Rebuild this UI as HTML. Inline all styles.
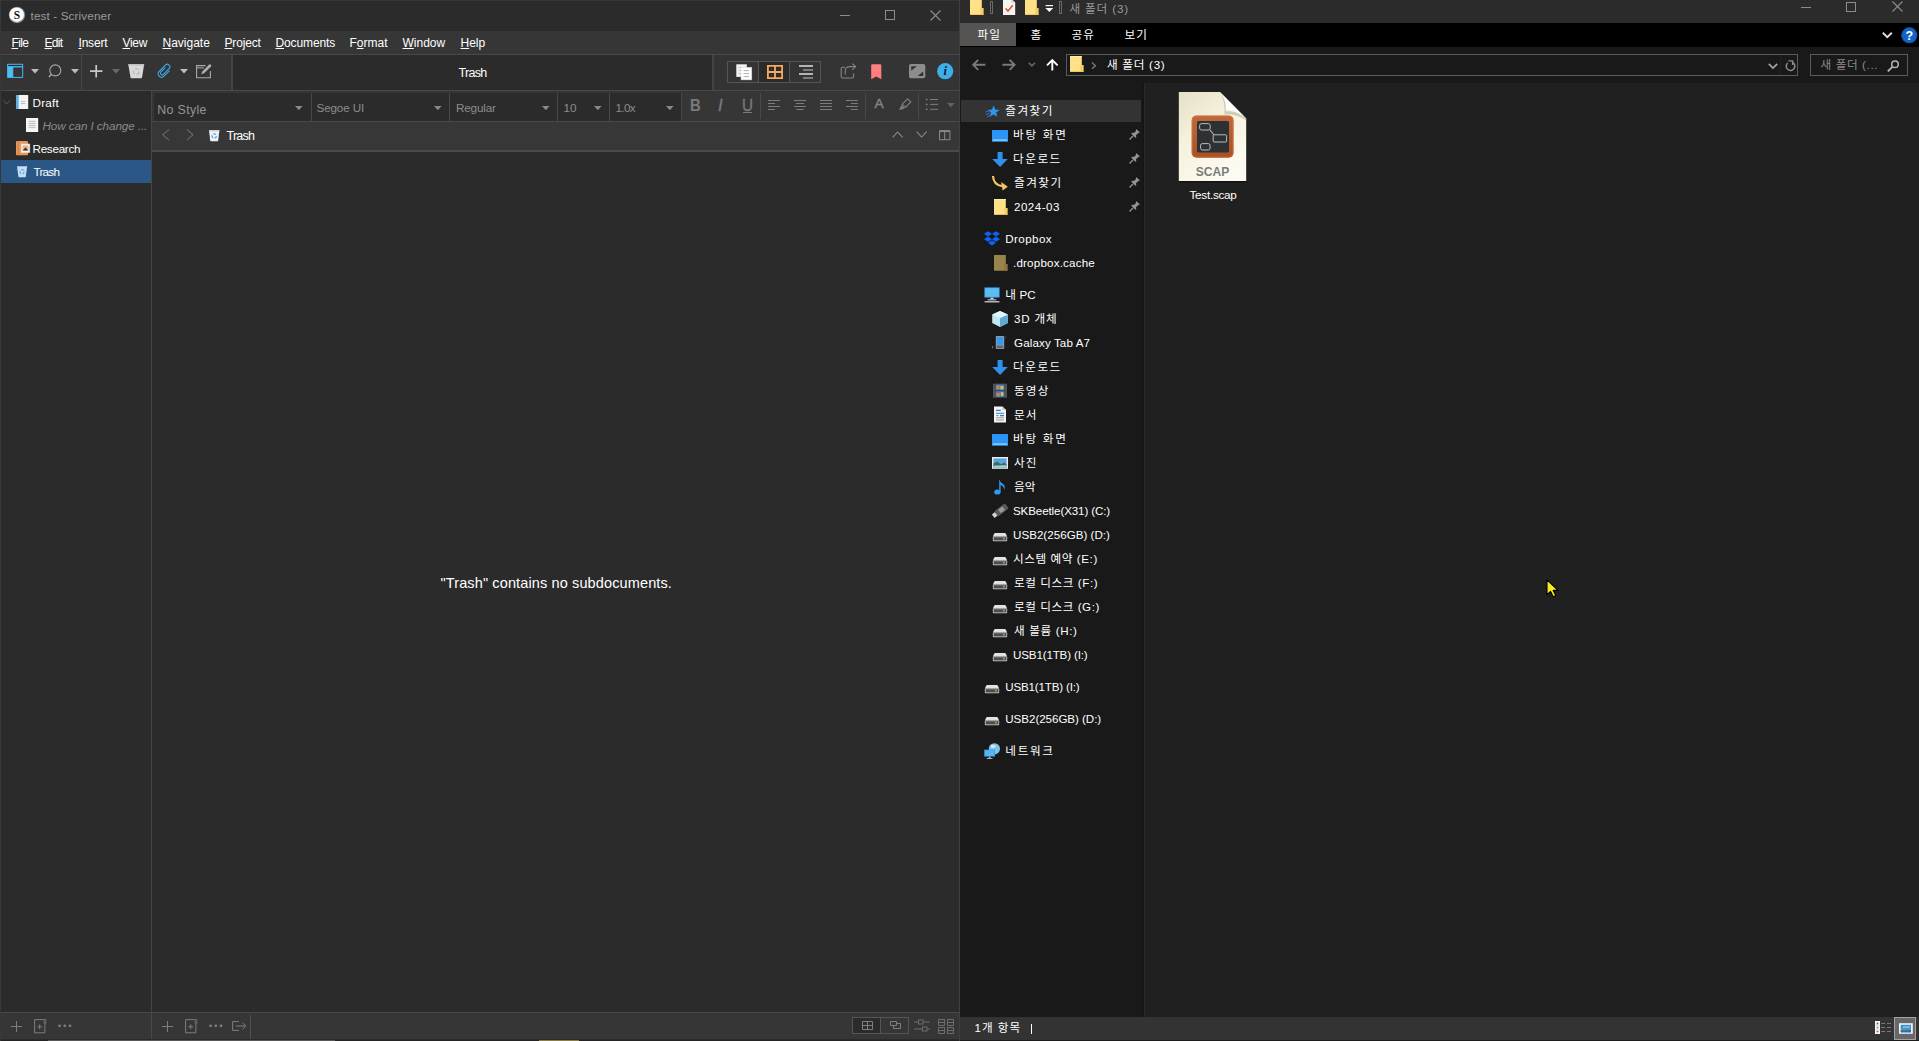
<!DOCTYPE html>
<html lang="ko">
<head>
<meta charset="utf-8">
<title>test - Scrivener</title>
<style>
*{box-sizing:border-box;margin:0;padding:0}
html,body{width:1919px;height:1041px;overflow:hidden;background:#2b2b2b}
body{position:relative;font-family:"Liberation Sans","Noto Sans CJK KR",sans-serif;font-size:12px;color:#fff}
.a{position:absolute}
.t{position:absolute;white-space:nowrap;line-height:20px;height:20px}
.t u{text-decoration:underline;text-underline-offset:0.6px;text-decoration-thickness:1px}
svg{position:absolute;overflow:visible}
#scr{left:0;top:0;width:960px;height:1041px;background:#2b2b2b;overflow:hidden;border-left:1px solid #383838;border-right:1px solid #404040}
#scr>div{margin-left:-1px}
#s-title{left:0;top:0;width:960px;height:31px;background:#2b2b2b;box-shadow:inset 0 1px 0 #363636}
#s-menu{left:0;top:31px;width:960px;height:24px;background:#363636;border-bottom:1px solid #494949}
#s-tool{left:0;top:55px;width:960px;height:36px;background:#343434;border-bottom:1px solid #494949}
#s-tool-mid{left:233px;top:0;width:479px;height:35px;background:#2b2b2b}
#s-binder{left:0;top:91px;width:152px;height:921px;background:#2b2b2b;border-right:1px solid #464646}
#s-fmt{left:152px;top:91px;width:808px;height:31px;background:#363636;border-bottom:1px solid #494949}
#s-hdr{left:152px;top:122px;width:808px;height:30px;background:#373737;border-bottom:2px solid #4a4a4a}
#s-foot{left:0;top:1012px;width:960px;height:29px;background:#363636;border-top:1px solid #494949}
.combo{position:absolute;top:2px;height:28px;background:#2b2b2b;box-shadow:1px 0 0 #484848}
#exp{left:960px;top:0;width:959px;height:1041px;background:#202020;overflow:hidden}
#e-title{left:0;top:0;width:959px;height:23px;background:#2b2b2b}
#e-tabs{left:0;top:23px;width:959px;height:24px;background:#000}
#e-addr{left:0;top:47px;width:959px;height:36px;background:#191919}
#e-nav{left:0;top:83px;width:185px;height:934px;background:#191919;border-right:1px solid #2b2b2b}
#e-status{left:0;top:1017px;width:959px;height:23px;background:#333}
#e-bot{left:0;top:1040px;width:959px;height:1px;background:#1c1c1c}
</style>
</head>
<body>
<div id="scr" class="a">
  <div id="s-title" class="a">
    <svg style="left:8px;top:6px" width="18" height="18" viewBox="0 0 18 18"><circle cx="9" cy="9" r="8.2" fill="#8a8a8a"/><circle cx="8.7" cy="8.7" r="7.3" fill="#fdfdfd"/><text x="8.9" y="12.8" text-anchor="middle" font-family="Liberation Serif,serif" font-weight="bold" font-size="11.5" fill="#111">S</text></svg>
    <div class="a" style="left:840px;top:15px;width:10px;height:1px;background:#8c8c8c"></div>
    <div class="a" style="left:885px;top:10px;width:10px;height:10px;border:1px solid #8c8c8c"></div>
    <svg style="left:930px;top:10px" width="11" height="11" viewBox="0 0 11 11"><path d="M0.5 0.5L10.5 10.5M10.5 0.5L0.5 10.5" stroke="#8c8c8c" stroke-width="1.1" fill="none"/></svg>
  </div>
  <div id="s-menu" class="a"></div>
  <div id="s-tool" class="a">
    <div class="a" style="left:81px;top:0;width:1px;height:35px;background:#474747"></div>
    <div class="a" style="left:231px;top:0;width:2px;height:35px;background:#444"></div>
    <div id="s-tool-mid" class="a"></div>
    <div class="a" style="left:712px;top:0;width:2px;height:35px;background:#444"></div>
    <!-- binder toggle icon  x7-23 y64-78 -->
    <svg style="left:7px;top:8px" width="17" height="16" viewBox="0 0 17 16"><rect x="0" y="0.8" width="16.2" height="14.3" rx="0.8" fill="#3daee9"/><rect x="1.2" y="1.9" width="13.8" height="1.1" fill="#2e2a2a"/><rect x="6.3" y="4.5" width="8.8" height="9.4" fill="#343434"/><rect x="1" y="4" width="4.6" height="10.2" fill="#52bcf0"/></svg>
    <svg style="left:31px;top:14px" width="8" height="5" viewBox="0 0 8 5"><path d="M0 0H8L4 4.6Z" fill="#bdbdbd"/></svg>
    <!-- search x48-62 y64-78 -->
    <svg style="left:48px;top:9px" width="15" height="15" viewBox="0 0 15 15"><circle cx="7.3" cy="6.4" r="5.5" fill="none" stroke="#a6a6a6" stroke-width="1.1"/><path d="M3.5 10.3L0.9 13" stroke="#a6a6a6" stroke-width="1.5"/></svg>
    <svg style="left:71px;top:14px" width="8" height="5" viewBox="0 0 8 5"><path d="M0 0H8L4 4.6Z" fill="#bdbdbd"/></svg>
    <!-- plus x90-102 -->
    <svg style="left:90px;top:10px" width="13" height="13" viewBox="0 0 13 13"><path d="M6.2 0V12.4M0 6.2H12.4" stroke="#c8c8c8" stroke-width="1.7"/></svg>
    <svg style="left:112px;top:14px" width="8" height="5" viewBox="0 0 8 5"><path d="M0 0H8L4 4.6Z" fill="#6a6a6a"/></svg>
    <!-- trash x128-144 y64-78 -->
    <svg style="left:128px;top:9px" width="17" height="15" viewBox="0 0 17 15"><path d="M0.3 0.3H16.2L14 13.6Q13.9 14.2 13.3 14.2H3.2Q2.6 14.2 2.5 13.6Z" fill="#d9d9d9"/><path d="M0.3 0.3H16.2L16 1.8H0.5Z" fill="#c4c4c4"/><circle cx="8.2" cy="7.6" r="2.9" fill="none" stroke="#b6bac6" stroke-width="1.3" stroke-dasharray="4 2"/></svg>
    <!-- paperclip x157-172 y63-79 -->
    <svg style="left:156px;top:8px" width="17" height="17" viewBox="0 0 17 17"><g transform="translate(8.4 7.9) rotate(45) scale(0.95) translate(-4.1 -8.75)"><path d="M7.7 5V13A3.6 3.6 0 0 1 0.5 13V3.6A2.7 2.7 0 0 1 5.9 3.6V12A1.8 1.8 0 0 1 2.3 12V6" fill="none" stroke="#3daee9" stroke-width="1.1" stroke-linecap="round"/></g></svg>
    <svg style="left:180px;top:14px" width="8" height="5" viewBox="0 0 8 5"><path d="M0 0H8L4 4.6Z" fill="#bdbdbd"/></svg>
    <!-- compose x196-211 y64-78 -->
    <svg style="left:196px;top:8px" width="17" height="16" viewBox="0 0 17 16"><path d="M9.5 2.6H0.6V14.8H14.4V8" fill="none" stroke="#a8a8a8" stroke-width="1.1"/><path d="M0.6 4.9H8" stroke="#a8a8a8" stroke-width="1"/><path d="M5.2 11.3L6.3 8.4L13.2 1.5Q14 0.8 14.9 1.7Q15.7 2.6 15 3.4L8.1 10.2Z" fill="#b0b0b0"/></svg>
    <!-- view mode group x727-821 y61-82 -->
    <div class="a" style="left:727px;top:6px;width:94px;height:22px;border:1px solid #555"></div>
    <div class="a" style="left:758px;top:7px;width:32px;height:20px;background:#2b2b2b;border-left:1px solid #555;border-right:1px solid #555"></div>
    <svg style="left:736px;top:9px" width="17" height="17" viewBox="0 0 17 17"><rect x="0.3" y="0.3" width="10.5" height="12.6" fill="#f1f1f1"/><path d="M2.6 3.4H5M2.6 6.4H5M2.6 9.4H5" stroke="#bdbdbd" stroke-width="0.9"/><rect x="5" y="3.3" width="10.8" height="12.6" fill="#fff" stroke="#d0d0d0" stroke-width="0.5"/><path d="M7.6 6.6H13M7.6 9.6H13M7.6 12.6H13" stroke="#b0b0b0" stroke-width="1"/></svg>
    <svg style="left:767px;top:10px" width="16" height="14" viewBox="0 0 16 14"><path d="M0.9 0.9H15.1V13.1H0.9ZM8 0.9V13.1M0.9 7H15.1" fill="none" stroke="#f5a95f" stroke-width="1.8"/></svg>
    <svg style="left:799px;top:9px" width="15" height="15" viewBox="0 0 15 15"><path d="M0 2H14M0 10H14" stroke="#b4b4b4" stroke-width="1.8"/><path d="M4 6H14M4 14H14" stroke="#7c7c7c" stroke-width="1.8"/></svg>
    <!-- share x841-856 y63-78 -->
    <svg style="left:840.4px;top:8px" width="17" height="17" viewBox="0 0 17 17"><path d="M5 4.2H2.6Q1.2 4.2 1.2 5.6V13.6Q1.2 15 2.6 15H12.2Q13.6 15 13.6 13.6V10.5" fill="none" stroke="#858585" stroke-width="1.1"/><path d="M5.3 11.5V8Q5.3 3.6 10 3.6H15.5M12.3 0.6L15.6 3.6L12.3 6.8" fill="none" stroke="#858585" stroke-width="1.1"/></svg>
    <svg style="left:871px;top:9px" width="11" height="16" viewBox="0 0 11 16"><path d="M0.2 1.2Q0.2 0.2 1.2 0.2H9.3Q10.3 0.2 10.3 1.2V15.3L5.2 12.4L0.2 15.3Z" fill="#ff7f7f"/></svg>
    <!-- compose mode x909-925 y64-78 -->
    <svg style="left:909px;top:9px" width="17" height="15" viewBox="0 0 17 15"><rect x="0" y="0" width="16.3" height="14.2" rx="2" fill="#8d8d8d"/><path d="M2.2 6.8V2.2H7.8ZM14.2 7.4V12H8.6Z" fill="#333"/></svg>
    <svg style="left:937px;top:8px" width="17" height="17" viewBox="0 0 17 17"><circle cx="8.2" cy="8.2" r="8.1" fill="#3daee9"/><text x="8.3" y="12.4" text-anchor="middle" font-family="Liberation Serif,serif" font-style="italic" font-weight="bold" font-size="12.5" fill="#1a1a1a">i</text></svg>
  </div>
  <div id="s-binder" class="a">
    <div class="a" style="left:1px;top:69px;width:150px;height:23px;background:#2a5785"></div>
    <svg style="left:3px;top:9px" width="8" height="5" viewBox="0 0 8 5"><path d="M0.3 0.4L3.6 4L6.9 0.4" fill="none" stroke="#5a5a5a" stroke-width="1"/></svg>
    <!-- draft icon x16-28 y95-109 -->
    <svg style="left:16px;top:4px" width="13" height="15" viewBox="0 0 13 15"><rect x="0" y="0" width="12.2" height="14" fill="#f4f4f4"/><rect x="0" y="0" width="2.7" height="14" fill="#5cb0ea"/><path d="M5 6.4H9.4M5 8.5H9.4" stroke="#b9b9b9" stroke-width="0.9"/></svg>
    <!-- doc icon x26-38 y118-132 -->
    <svg style="left:26px;top:27px" width="13" height="15" viewBox="0 0 13 15"><rect x="0" y="0" width="12.2" height="14" fill="#f6f6f6"/><path d="M2.6 3.3H9.6M2.6 5.4H9.6M2.6 7.5H9.6M2.6 9.6H9.6" stroke="#b4b4b4" stroke-width="0.9"/></svg>
    <!-- research icon x16-30 y141-155 -->
    <svg style="left:16px;top:50px" width="15" height="15" viewBox="0 0 15 15"><rect x="0" y="0" width="12" height="14.2" rx="1" fill="#e9965c"/><rect x="1.6" y="0" width="1" height="14.2" fill="#c97a45"/><rect x="5.2" y="3" width="8.6" height="8.6" fill="#f7f7f7" stroke="#d9d9d9" stroke-width="0.6"/><rect x="6.6" y="4.4" width="5.8" height="5.6" fill="#f2b272"/><path d="M6.8 9.6L9.5 6.2L12.2 9.6Z" fill="#3a3a3a"/></svg>
    <!-- trash icon x17-27 y166-177 -->
    <svg style="left:17px;top:75px" width="11" height="12" viewBox="0 0 11 12"><path d="M0 0.2H10.2L8.8 10.6Q8.7 11.2 8.1 11.2H2.1Q1.5 11.2 1.4 10.6Z" fill="#c6ddf6"/><circle cx="5.1" cy="5.8" r="2.1" fill="none" stroke="#5aa7ec" stroke-width="1.2" stroke-dasharray="2.6 1.4"/></svg>
  </div>
  <div id="s-fmt" class="a">
    <!-- local coords: left=152, top=91 -->
    <div class="combo" style="left:2px;width:157px"></div>
    <div class="combo" style="left:160px;width:137px"></div>
    <div class="combo" style="left:298px;width:107px"></div>
    <div class="combo" style="left:406px;width:51px"></div>
    <div class="combo" style="left:458px;width:71px"></div>
    <svg class="dd" style="left:143px;top:15px" width="8" height="5" viewBox="0 0 8 5"><path d="M0 0H7.6L3.8 4.2Z" fill="#8a8a8a"/></svg>
    <svg class="dd" style="left:282px;top:15px" width="8" height="5" viewBox="0 0 8 5"><path d="M0 0H7.6L3.8 4.2Z" fill="#8a8a8a"/></svg>
    <svg class="dd" style="left:390px;top:15px" width="8" height="5" viewBox="0 0 8 5"><path d="M0 0H7.6L3.8 4.2Z" fill="#8a8a8a"/></svg>
    <svg class="dd" style="left:442px;top:15px" width="8" height="5" viewBox="0 0 8 5"><path d="M0 0H7.6L3.8 4.2Z" fill="#8a8a8a"/></svg>
    <svg class="dd" style="left:514px;top:15px" width="8" height="5" viewBox="0 0 8 5"><path d="M0 0H7.6L3.8 4.2Z" fill="#8a8a8a"/></svg>
    <span class="t" style="left:537.6px;top:5px;font-size:16.6px;font-weight:bold;color:#7a7a7a;transform:scaleX(0.9);transform-origin:0 0">B</span>
    <span class="t" style="left:566px;top:5px;font-size:16.6px;font-style:italic;color:#7a7a7a;-webkit-text-stroke:0.35px #7a7a7a">I</span>
    <span class="t" style="left:589.6px;top:4px;font-size:16.4px;color:#7a7a7a;-webkit-text-stroke:0.3px #7a7a7a;transform:scaleX(0.93);transform-origin:0 0">U</span>
    <div class="a" style="left:591px;top:21px;width:9px;height:1px;background:#7a7a7a"></div>
    <div class="a" style="left:608px;top:2px;width:1px;height:26px;background:#494949"></div>
    <svg style="left:616px;top:9px" width="13" height="11" viewBox="0 0 13 11"><path d="M0 0.5H12M0 3.5H7M0 6.5H12M0 9.5H7" stroke="#7c7c7c" stroke-width="1"/></svg>
    <svg style="left:642px;top:9px" width="13" height="11" viewBox="0 0 13 11"><path d="M0 0.5H12M2 3.5H10M0 6.5H12M2.5 9.5H9.5" stroke="#7c7c7c" stroke-width="1"/></svg>
    <svg style="left:668px;top:9px" width="13" height="11" viewBox="0 0 13 11"><path d="M0 0.5H12M0 3.5H12M0 6.5H12M0 9.5H12" stroke="#7c7c7c" stroke-width="1"/></svg>
    <svg style="left:694px;top:9px" width="13" height="11" viewBox="0 0 13 11"><path d="M0 0.5H12M5 3.5H12M0 6.5H12M5 9.5H12" stroke="#7c7c7c" stroke-width="1"/></svg>
    <div class="a" style="left:713px;top:2px;width:1px;height:26px;background:#494949"></div>
    <span class="t" style="left:722.4px;top:3px;font-size:13.7px;color:#858585;-webkit-text-stroke:0.45px #858585">A</span>
    <div class="a" style="left:720px;top:20px;width:13px;height:2px;background:#303834"></div>
    <svg style="left:746px;top:7px" width="14" height="13" viewBox="0 0 14 13"><path d="M4.2 6.2L9.6 0.8L12.8 4L7.4 9.4Z" fill="none" stroke="#7c7c7c" stroke-width="1.2"/><path d="M3.6 6.8L6.8 10L4.8 11.2L1 12Z" fill="#7c7c7c"/></svg>
    <div class="a" style="left:766px;top:2px;width:1px;height:26px;background:#494949"></div>
    <svg style="left:773px;top:8px" width="14" height="13" viewBox="0 0 14 13"><path d="M5 0.5H13.1M5 5.4H13.1M5 10.3H13.1" stroke="#7c7c7c" stroke-width="1"/><path d="M0.8 0.5H2.6M0.8 5.4H2.6M0.8 10.3H2.6" stroke="#7c7c7c" stroke-width="1.5"/></svg>
    <svg style="left:795px;top:12px" width="8" height="5" viewBox="0 0 8 5"><path d="M0 0H7.6L3.8 4.2Z" fill="#626262"/></svg>
  </div>
  <div id="s-hdr" class="a">
    <!-- local coords: left=152, top=122 -->
    <svg style="left:10px;top:7px" width="8" height="12" viewBox="0 0 8 12"><path d="M7 0.4L0.8 5.8L7 11.2" fill="none" stroke="#6a6a6a" stroke-width="1.1"/></svg>
    <svg style="left:34px;top:7px" width="8" height="12" viewBox="0 0 8 12"><path d="M0.8 0.4L7 5.8L0.8 11.2" fill="none" stroke="#6a6a6a" stroke-width="1.1"/></svg>
    <svg style="left:57px;top:8px" width="11" height="12" viewBox="0 0 11 12"><path d="M0 0.2H10.4L9.2 10.6Q9.1 11.2 8.5 11.2H1.9Q1.3 11.2 1.2 10.6Z" fill="#f2f2f2"/><path d="M0 0.2H10.4L10.2 1.4H0.2Z" fill="#d6d6d6"/><circle cx="5.2" cy="6" r="2.2" fill="none" stroke="#4aa8f0" stroke-width="1.3" stroke-dasharray="2.8 1.4"/></svg>
    <svg style="left:739.6px;top:8.6px" width="12" height="7" viewBox="0 0 12 7"><path d="M0.6 6.4L5.6 1L10.6 6.4" fill="none" stroke="#8a8a8a" stroke-width="1.1"/></svg>
    <svg style="left:763.6px;top:8.9px" width="12" height="7" viewBox="0 0 12 7"><path d="M0.6 0.6L5.6 6L10.6 0.6" fill="none" stroke="#8a8a8a" stroke-width="1.1"/></svg>
    <svg style="left:787px;top:8px" width="12" height="11" viewBox="0 0 12 11"><path d="M0.5 0.9H10.9V9.7H0.5ZM5.7 0.9V9.7" fill="none" stroke="#8a8a8a" stroke-width="1"/><path d="M0.5 1.2H10.9" stroke="#8a8a8a" stroke-width="1.6"/></svg>
  </div>
  <div id="s-foot" class="a">
    <!-- local coords: left=0, top=1012 -->
    <div class="a" style="left:151px;top:-1px;width:1px;height:30px;background:#484848"></div>
    <svg style="left:11px;top:8px" width="12" height="12" viewBox="0 0 12 12"><path d="M5.5 0V11M0 5.5H11" stroke="#7e7e7e" stroke-width="1"/></svg>
    <svg style="left:34px;top:6px" width="13" height="15" viewBox="0 0 13 15"><path d="M9.5 0.6H0.6V13.8H10.9V4" fill="none" stroke="#7e7e7e" stroke-width="1"/><path d="M10 0.4H11.8V4.2H10Z" fill="none" stroke="#7e7e7e" stroke-width="0.8"/><path d="M5.7 5.3V10.3M3.2 7.8H8.2" stroke="#7e7e7e" stroke-width="1"/></svg>
    <svg style="left:58px;top:11px" width="14" height="4" viewBox="0 0 14 4"><circle cx="1.6" cy="1.8" r="1.4" fill="#7e7e7e"/><circle cx="6.8" cy="1.8" r="1.4" fill="#7e7e7e"/><circle cx="12" cy="1.8" r="1.4" fill="#7e7e7e"/></svg>
    <svg style="left:162px;top:8px" width="12" height="12" viewBox="0 0 12 12"><path d="M5.5 0V11M0 5.5H11" stroke="#7e7e7e" stroke-width="1"/></svg>
    <svg style="left:185px;top:6px" width="13" height="15" viewBox="0 0 13 15"><path d="M9.5 0.6H0.6V13.8H10.9V4" fill="none" stroke="#7e7e7e" stroke-width="1"/><path d="M10 0.4H11.8V4.2H10Z" fill="none" stroke="#7e7e7e" stroke-width="0.8"/><path d="M5.7 5.3V10.3M3.2 7.8H8.2" stroke="#7e7e7e" stroke-width="1"/></svg>
    <svg style="left:209px;top:11px" width="14" height="4" viewBox="0 0 14 4"><circle cx="1.6" cy="1.8" r="1.4" fill="#7e7e7e"/><circle cx="6.8" cy="1.8" r="1.4" fill="#7e7e7e"/><circle cx="12" cy="1.8" r="1.4" fill="#7e7e7e"/></svg>
    <svg style="left:232px;top:8px" width="15" height="11" viewBox="0 0 15 11"><path d="M7 0.6H0.6V9.4H7" fill="none" stroke="#7e7e7e" stroke-width="1"/><path d="M3.6 5H13.6M10.6 1.8L13.8 5L10.6 8.2" fill="none" stroke="#7e7e7e" stroke-width="1"/></svg>
    <div class="a" style="left:250px;top:2px;width:1px;height:24px;background:#505050"></div>
    <div class="a" style="left:852px;top:4px;width:57px;height:17px;border:1px solid #555"></div>
    <div class="a" style="left:853px;top:5px;width:28px;height:15px;background:#2b2b2b;border-right:1px solid #555"></div>
    <svg style="left:862px;top:8px" width="12" height="10" viewBox="0 0 12 10"><path d="M0.5 0.5H10.5V8.5H0.5ZM5.5 0.5V8.5M0.5 4.5H10.5" fill="none" stroke="#7e7e7e" stroke-width="1"/></svg>
    <svg style="left:890px;top:8px" width="12" height="10" viewBox="0 0 12 10"><path d="M0.5 0.5H6.5V4.5H0.5ZM3.5 4.5V7.5H10.5V2.5H6.5" fill="none" stroke="#7e7e7e" stroke-width="1"/></svg>
    <svg style="left:914px;top:6px" width="17" height="14" viewBox="0 0 17 14"><path d="M0 3H4M9 3H16M0 10H8M13 10H16" stroke="#6c6c6c" stroke-width="1"/><rect x="4.5" y="1" width="4.5" height="4" fill="none" stroke="#6c6c6c"/><rect x="8.5" y="8" width="4.5" height="4" fill="none" stroke="#6c6c6c"/></svg>
    <svg style="left:938px;top:6px" width="17" height="15" viewBox="0 0 17 15"><path d="M0.5 0.5H6.5V6.5H0.5ZM9.5 0.5H15.5V6.5H9.5ZM0.5 8.5H6.5V14.5H0.5ZM9.5 8.5H15.5V14.5H9.5ZM0.5 3.5H6.5M9.5 3.5H15.5M0.5 11.5H6.5M9.5 11.5H15.5" fill="none" stroke="#6c6c6c" stroke-width="1"/></svg>
    <div class="a" style="left:0;top:26px;width:960px;height:1px;background:#2b2b2b"></div>
    <div class="a" style="left:0;top:27px;width:960px;height:1px;background:#242424"></div>
    <div class="a" style="left:48px;top:27px;width:287px;height:1px;background:#585858"></div>
    <div class="a" style="left:539px;top:27px;width:40px;height:1px;background:#8c7d45"></div>
  </div>
</div>
<div id="exp" class="a">
  <!-- local coords: left=960 -->
  <div id="e-title" class="a">
    <svg style="left:10px;top:-1px" width="14" height="17" viewBox="0 0 14 17"><path d="M0 0H11.8V9H13.4V16H0Z" fill="#ffe288"/><path d="M0 0H11.8V1H0Z" fill="#ffedb0"/><path d="M10.2 9H13.4V16H10.2Z" fill="#f5cd63"/><path d="M0 15.2H13.4V16H0Z" fill="#ecbf52"/></svg>
    <div class="a" style="left:30px;top:1px;width:3px;height:13px;border:1px solid #6a6a6a"></div>
    <svg style="left:43px;top:-1px" width="13" height="17" viewBox="0 0 13 17"><path d="M0 0H8.6L12.2 3.6V16H0Z" fill="#f4f4f4"/><path d="M8.6 0L12.2 3.6H8.6Z" fill="#c9c9c9"/><path d="M2.6 9.4L5 12L9.8 6.2" fill="none" stroke="#e3572b" stroke-width="1.6"/></svg>
    <svg style="left:65px;top:-1px" width="14" height="17" viewBox="0 0 14 17"><path d="M0 0H11.8V9H13.4V16H0Z" fill="#ffe288"/><path d="M0 0H11.8V1H0Z" fill="#ffedb0"/><path d="M10.2 9H13.4V16H10.2Z" fill="#f5cd63"/><path d="M0 15.2H13.4V16H0Z" fill="#ecbf52"/></svg>
    <svg style="left:85px;top:5px" width="9" height="8" viewBox="0 0 9 8"><path d="M0.6 0.6H8" stroke="#fff" stroke-width="1.2"/><path d="M0.4 3H8.2L4.3 7Z" fill="#fff"/></svg>
    <div class="a" style="left:99px;top:1px;width:3px;height:13px;border:1px solid #6a6a6a"></div>
    <div class="a" style="left:841px;top:7px;width:10px;height:1px;background:#8c8c8c"></div>
    <div class="a" style="left:886px;top:2px;width:10px;height:10px;border:1px solid #8c8c8c"></div>
    <svg style="left:932px;top:1px" width="11" height="11" viewBox="0 0 11 11"><path d="M0.5 0.5L10.5 10.5M10.5 0.5L0.5 10.5" stroke="#8c8c8c" stroke-width="1.1" fill="none"/></svg>
  </div>
  <div id="e-tabs" class="a">
    <div class="a" style="left:0;top:0;width:56px;height:23px;background:#565452"></div>
    <svg style="left:921.6px;top:9px" width="11" height="7" viewBox="0 0 11 7"><path d="M0.8 0.8L5.3 5.2L9.8 0.8" fill="none" stroke="#e0e0e0" stroke-width="1.9"/></svg>
    <svg style="left:940.6px;top:3.6px" width="17" height="17" viewBox="0 0 17 17"><circle cx="8.3" cy="8.3" r="8" fill="#1464c8"/><circle cx="8.3" cy="8.3" r="7.4" fill="none" stroke="#0f4fa3" stroke-width="0.8"/><text x="8.4" y="12.8" text-anchor="middle" font-family="Liberation Sans,sans-serif" font-weight="bold" font-size="12.5" fill="#fff">?</text></svg>
  </div>
  <div id="e-addr" class="a">
    <!-- local top=47 -->
    <svg style="left:12px;top:12px" width="14" height="12" viewBox="0 0 14 12"><path d="M13.4 5.8H1.4M6.2 0.8L1.2 5.8L6.2 10.8" fill="none" stroke="#7a7a7a" stroke-width="1.9"/></svg>
    <svg style="left:42px;top:12px" width="14" height="12" viewBox="0 0 14 12"><path d="M0.4 5.8H12.4M7.6 0.8L12.6 5.8L7.6 10.8" fill="none" stroke="#7a7a7a" stroke-width="1.9"/></svg>
    <svg style="left:68px;top:15px" width="8" height="6" viewBox="0 0 8 6"><path d="M0.8 0.8L3.9 3.9L7 0.8" fill="none" stroke="#686868" stroke-width="1.6"/></svg>
    <svg style="left:86px;top:12px" width="13" height="12" viewBox="0 0 13 12"><path d="M6.3 11.6V1.2M1 6.4L6.3 1.1L11.6 6.4" fill="none" stroke="#fff" stroke-width="1.9"/></svg>
    <div class="a" style="left:106px;top:7px;width:732px;height:22px;border:1px solid #5c5c5c"></div>
    <svg style="left:110px;top:9px" width="14" height="17" viewBox="0 0 14 17"><path d="M0 0H11.8V9H13.4V16H0Z" fill="#ffe288"/><path d="M0 0H11.8V1H0Z" fill="#ffedb0"/><path d="M10.2 9H13.4V16H10.2Z" fill="#f5cd63"/><path d="M0 15.2H13.4V16H0Z" fill="#ecbf52"/></svg>
    <svg style="left:131px;top:15px" width="6" height="8" viewBox="0 0 6 8"><path d="M1 0.6L4.4 3.7L1 6.8" fill="none" stroke="#7a7a7a" stroke-width="1.4"/></svg>
    <svg style="left:808px;top:16px" width="11" height="7" viewBox="0 0 11 7"><path d="M0.8 0.8L5 5L9.2 0.8" fill="none" stroke="#a4a4a4" stroke-width="1.7"/></svg>
    <div class="a" style="left:820px;top:8px;width:1px;height:20px;background:#222"></div>
    <svg style="left:824.6px;top:12.6px" width="11" height="12" viewBox="0 0 11 12"><path d="M2.6 3A4.3 4.3 0 1 0 7.2 2.2" fill="none" stroke="#8c8c8c" stroke-width="1.5"/><path d="M3.4 0.9H7.6V5" fill="none" stroke="#8c8c8c" stroke-width="1.4"/></svg>
    <div class="a" style="left:850px;top:7px;width:98px;height:22px;border:1px solid #5c5c5c"></div>
    <svg style="left:927px;top:13px" width="13" height="13" viewBox="0 0 13 13"><circle cx="8" cy="4.2" r="3.3" fill="none" stroke="#b4b4b4" stroke-width="1.5"/><path d="M5.6 6.6L0.8 11.4" stroke="#b4b4b4" stroke-width="1.9"/></svg>
  </div>
  <div id="e-nav" class="a">
    <div class="a" style="left:182px;top:0;width:2px;height:934px;background:#151515"></div>
    <div class="a" style="left:1px;top:17px;width:180px;height:22px;background:#333"></div>
    <svg style="left:24px;top:20px" width="16" height="16" viewBox="0 0 16 16"><path d="M9.6 2.6L11.2 6.6L15.6 6.9L12.2 9.6L13.3 13.8L9.6 11.5L5.9 13.8L7 9.6L3.8 7L8 6.6Z" fill="#2f95ee"/><path d="M1.2 9.2L5.6 7.6M1.8 11.6L6 10M3 13.8L6.2 12.4" stroke="#2f7fd2" stroke-width="0.9"/></svg>
    <svg style="left:32px;top:44px" width="16" height="16" viewBox="0 0 16 16"><rect x="0" y="3" width="16" height="11.8" fill="#2b94f4"/><rect x="0.8" y="12.6" width="14.4" height="0.9" fill="#d9ecfb"/></svg>
    <svg style="left:32px;top:68px" width="16" height="16" viewBox="0 0 16 16"><path d="M5.6 1H10.6V8H15.8L8.1 16L0.2 8H5.6Z" fill="#2f8fe9"/></svg>
    <svg style="left:32px;top:92px" width="16" height="16" viewBox="0 0 16 16"><path d="M1 1Q1.4 10 10.4 11.2" fill="none" stroke="#f3c55a" stroke-width="2.2"/><path d="M9.2 7L15.8 11.8L10.6 15.6Z" fill="#f3c55a"/></svg>
    <svg style="left:32px;top:115px" width="16" height="17" viewBox="0 0 16 17"><path d="M2 1H13.8V10H15.4V16.8H2Z" fill="#ffe288"/><path d="M2 1H13.8V2H2Z" fill="#ffedb0"/><path d="M12.2 10H15.4V16.8H12.2Z" fill="#f5cd63"/><path d="M2 16H15.4V16.8H2Z" fill="#ecbf52"/></svg>
    <svg style="left:24px;top:148px" width="16" height="16" viewBox="0 0 16 16"><path d="M4 0.2L8 2.8L4 5.4L0 2.8ZM12 0.2L16 2.8L12 5.4L8 2.8ZM4 5.6L8 8.2L4 10.8L0 8.2ZM12 5.6L16 8.2L12 10.8L8 8.2ZM8 9.2L12 11.8L8 14.4L4 11.8Z" fill="#0d63f3"/></svg>
    <svg style="left:32px;top:171px" width="16" height="17" viewBox="0 0 16 17"><path d="M2 1H13.8V10H15.4V16.8H2Z" fill="#98834c"/><path d="M12.2 10H15.4V16.8H12.2Z" fill="#8c763d"/></svg>
    <svg style="left:24px;top:204px" width="16" height="16" viewBox="0 0 16 16"><rect x="0.4" y="0.4" width="15.2" height="10.2" fill="#3f9fe0"/><rect x="1.2" y="1.2" width="13.6" height="8.6" fill="#5cbcf4"/><rect x="6.4" y="10.6" width="3.2" height="2" fill="#b9c4cc"/><rect x="3.6" y="12.4" width="8.8" height="0.9" fill="#dfe6ea"/><rect x="0.6" y="14.2" width="14.8" height="1.2" fill="#d6dce0"/></svg>
    <svg style="left:32px;top:228px" width="16" height="16" viewBox="0 0 16 16"><path d="M8 0L15.8 3.4V12L8 16L0.2 12V3.4Z" fill="#bfe6f3"/><path d="M8 7L15.8 3.4V12L8 16Z" fill="#62a9cf"/><path d="M8 0L15.8 3.4L8 7L0.2 3.4Z" fill="#e4f5fa"/></svg>
    <svg style="left:32px;top:252px" width="16" height="16" viewBox="0 0 16 16"><rect x="3.8" y="1" width="8.4" height="13" rx="0.8" fill="#8f9aa2"/><rect x="4.8" y="2" width="6.4" height="7.6" fill="#2f9bf2"/><rect x="4.8" y="10.6" width="6.4" height="2.6" fill="#5d666c"/><path d="M0.6 11V13.4" stroke="#8a8a8a" stroke-width="0.8"/><path d="M12.2 4Q14.6 3 13.8 0.6" fill="none" stroke="#555" stroke-width="0.7"/></svg>
    <svg style="left:32px;top:276px" width="16" height="16" viewBox="0 0 16 16"><path d="M5.6 1H10.6V8H15.8L8.1 16L0.2 8H5.6Z" fill="#2f8fe9"/></svg>
    <svg style="left:32px;top:300px" width="16" height="16" viewBox="0 0 16 16"><rect x="1" y="0.4" width="14" height="14.6" fill="#3c3c3c"/><path d="M2 1.4V14.2M14 1.4V14.2" stroke="#9a9a9a" stroke-width="1" stroke-dasharray="1 1"/><rect x="3.6" y="1.4" width="8.8" height="5.8" fill="#3f7fd0"/><rect x="3.6" y="8.2" width="8.8" height="5.8" fill="#3f7fd0"/><rect x="4.4" y="2.4" width="3" height="3.6" fill="#e0793a"/><rect x="8.4" y="3" width="3" height="3.4" fill="#d9c23c"/><rect x="4.4" y="10" width="3.4" height="3.2" fill="#e0793a"/><rect x="8.8" y="9.2" width="2.6" height="3.6" fill="#d9c23c"/></svg>
    <svg style="left:32px;top:323px" width="16" height="17" viewBox="0 0 16 17"><path d="M2 0.4H10.4L14 4V16.4H2Z" fill="#f3f3f3"/><path d="M10.4 0.4L14 4H10.4Z" fill="#c8c8c8"/><path d="M4 4.4H8.8M4 7.2H12M8 9.6H12" stroke="#2f7fd6" stroke-width="1.1"/><path d="M4 9.6H7M4 11.8H12M4 14H12" stroke="#8e8e8e" stroke-width="0.9"/></svg>
    <svg style="left:32px;top:348px" width="16" height="16" viewBox="0 0 16 16"><rect x="0" y="3" width="16" height="11.8" fill="#2b94f4"/><rect x="0.8" y="12.6" width="14.4" height="0.9" fill="#d9ecfb"/></svg>
    <svg style="left:32px;top:372px" width="16" height="16" viewBox="0 0 16 16"><rect x="0" y="2" width="16" height="11.8" fill="#eeeeee"/><rect x="1.4" y="3.4" width="13.2" height="9" fill="#57a5dd"/><path d="M1.4 12.4V8.6L5 6.4L9 9.2L12 7.6L14.6 9.4V12.4Z" fill="#3d6f56"/><path d="M1.4 12.4V10.8L14.6 10.2V12.4Z" fill="#a9d3ea"/></svg>
    <svg style="left:32px;top:396px" width="16" height="16" viewBox="0 0 16 16"><ellipse cx="5.4" cy="13" rx="3.2" ry="2.6" fill="#2f9af0"/><path d="M7.2 13V0.2Q8 3.4 11.2 5.2Q14 7.2 12 11Q12.4 7.4 8.6 6V13Z" fill="#2f9af0"/></svg>
    <svg style="left:32px;top:420px" width="16" height="16" viewBox="0 0 16 16"><g transform="rotate(-38 8 8)"><rect x="-0.6" y="5.8" width="4" height="4.4" fill="#d2d2d2"/><rect x="3.2" y="4.8" width="13.4" height="6.4" rx="1.6" fill="#5a5a5a"/><rect x="7.4" y="5.8" width="5.2" height="4.4" fill="#9a9a9a"/></g></svg>
    <svg style="left:32px;top:444px" width="16" height="16" viewBox="0 0 16 16"><path d="M2.6 6H13.4L15.2 9.6H0.8Z" fill="#e2e2e2"/><rect x="0.8" y="9.4" width="14.4" height="4.8" rx="0.6" fill="#c9c9c9"/><rect x="1.6" y="10.2" width="12.8" height="3.2" fill="#4c4c4c"/><rect x="11" y="11.2" width="1.8" height="1.2" fill="#7fdc4a"/></svg>
    <svg style="left:32px;top:468px" width="16" height="16" viewBox="0 0 16 16"><path d="M2.6 6H13.4L15.2 9.6H0.8Z" fill="#e2e2e2"/><rect x="0.8" y="9.4" width="14.4" height="4.8" rx="0.6" fill="#c9c9c9"/><rect x="1.6" y="10.2" width="12.8" height="3.2" fill="#4c4c4c"/><rect x="11" y="11.2" width="1.8" height="1.2" fill="#7fdc4a"/></svg>
    <svg style="left:32px;top:492px" width="16" height="16" viewBox="0 0 16 16"><path d="M2.6 6H13.4L15.2 9.6H0.8Z" fill="#e2e2e2"/><rect x="0.8" y="9.4" width="14.4" height="4.8" rx="0.6" fill="#c9c9c9"/><rect x="1.6" y="10.2" width="12.8" height="3.2" fill="#4c4c4c"/><rect x="11" y="11.2" width="1.8" height="1.2" fill="#7fdc4a"/></svg>
    <svg style="left:32px;top:516px" width="16" height="16" viewBox="0 0 16 16"><path d="M2.6 6H13.4L15.2 9.6H0.8Z" fill="#e2e2e2"/><rect x="0.8" y="9.4" width="14.4" height="4.8" rx="0.6" fill="#c9c9c9"/><rect x="1.6" y="10.2" width="12.8" height="3.2" fill="#4c4c4c"/><rect x="11" y="11.2" width="1.8" height="1.2" fill="#7fdc4a"/></svg>
    <svg style="left:32px;top:540px" width="16" height="16" viewBox="0 0 16 16"><path d="M2.6 6H13.4L15.2 9.6H0.8Z" fill="#e2e2e2"/><rect x="0.8" y="9.4" width="14.4" height="4.8" rx="0.6" fill="#c9c9c9"/><rect x="1.6" y="10.2" width="12.8" height="3.2" fill="#4c4c4c"/><rect x="11" y="11.2" width="1.8" height="1.2" fill="#7fdc4a"/></svg>
    <svg style="left:32px;top:564px" width="16" height="16" viewBox="0 0 16 16"><path d="M2.6 6H13.4L15.2 9.6H0.8Z" fill="#e2e2e2"/><rect x="0.8" y="9.4" width="14.4" height="4.8" rx="0.6" fill="#c9c9c9"/><rect x="1.6" y="10.2" width="12.8" height="3.2" fill="#4c4c4c"/><rect x="11" y="11.2" width="1.8" height="1.2" fill="#7fdc4a"/></svg>
    <svg style="left:24px;top:596px" width="16" height="16" viewBox="0 0 16 16"><path d="M2.6 6H13.4L15.2 9.6H0.8Z" fill="#e2e2e2"/><rect x="0.8" y="9.4" width="14.4" height="4.8" rx="0.6" fill="#c9c9c9"/><rect x="1.6" y="10.2" width="12.8" height="3.2" fill="#4c4c4c"/><rect x="11" y="11.2" width="1.8" height="1.2" fill="#7fdc4a"/></svg>
    <svg style="left:24px;top:628px" width="16" height="16" viewBox="0 0 16 16"><path d="M2.6 6H13.4L15.2 9.6H0.8Z" fill="#e2e2e2"/><rect x="0.8" y="9.4" width="14.4" height="4.8" rx="0.6" fill="#c9c9c9"/><rect x="1.6" y="10.2" width="12.8" height="3.2" fill="#4c4c4c"/><rect x="11" y="11.2" width="1.8" height="1.2" fill="#7fdc4a"/></svg>
    <svg style="left:24px;top:660px" width="16" height="16" viewBox="0 0 16 16"><circle cx="10.4" cy="5.8" r="5.6" fill="#7fc4ea"/><path d="M6.6 2.4Q9.4 0.6 12 3.4Q10 5.6 7 4.6Z" fill="#cfeaf7"/><rect x="0.2" y="6.6" width="10.8" height="7" fill="#3f9fe0"/><rect x="1" y="7.4" width="9.2" height="5.4" fill="#56b6f2"/><rect x="4.8" y="13.6" width="1.6" height="1.4" fill="#aeb8bf"/><rect x="2.8" y="15" width="5.6" height="0.8" fill="#cfd6da"/></svg>
    <svg style="left:168.6px;top:46.1px" width="11" height="11" viewBox="0 0 11 11"><path d="M7.6 0.2L10.7 3.3L9.7 4.3L9.2 3.9L7 6.3L7.3 8L6.3 8.8L2.3 4.8L3.1 3.8L4.8 4.1L7.2 1.9L6.7 1.3Z" fill="#8e979c"/><path d="M4 7L0.5 10.5" stroke="#8e979c" stroke-width="1.3"/></svg>
    <svg style="left:168.6px;top:70.1px" width="11" height="11" viewBox="0 0 11 11"><path d="M7.6 0.2L10.7 3.3L9.7 4.3L9.2 3.9L7 6.3L7.3 8L6.3 8.8L2.3 4.8L3.1 3.8L4.8 4.1L7.2 1.9L6.7 1.3Z" fill="#8e979c"/><path d="M4 7L0.5 10.5" stroke="#8e979c" stroke-width="1.3"/></svg>
    <svg style="left:168.6px;top:94.1px" width="11" height="11" viewBox="0 0 11 11"><path d="M7.6 0.2L10.7 3.3L9.7 4.3L9.2 3.9L7 6.3L7.3 8L6.3 8.8L2.3 4.8L3.1 3.8L4.8 4.1L7.2 1.9L6.7 1.3Z" fill="#8e979c"/><path d="M4 7L0.5 10.5" stroke="#8e979c" stroke-width="1.3"/></svg>
    <svg style="left:168.6px;top:118.1px" width="11" height="11" viewBox="0 0 11 11"><path d="M7.6 0.2L10.7 3.3L9.7 4.3L9.2 3.9L7 6.3L7.3 8L6.3 8.8L2.3 4.8L3.1 3.8L4.8 4.1L7.2 1.9L6.7 1.3Z" fill="#8e979c"/><path d="M4 7L0.5 10.5" stroke="#8e979c" stroke-width="1.3"/></svg>
  </div>
  <!-- file icon x1178.8-1246.2 y92-181 ; local left = 218.8 -->
  <svg style="left:216px;top:90px" width="74" height="96" viewBox="0 0 74 96">
    <defs>
      <linearGradient id="pg" x1="0" y1="0" x2="0.6" y2="1"><stop offset="0" stop-color="#e6e0c6"/><stop offset="0.45" stop-color="#f6f1dc"/><stop offset="1" stop-color="#fdfbf1"/></linearGradient>
      <linearGradient id="fold" x1="0" y1="1" x2="1" y2="0"><stop offset="0" stop-color="#d9d6cb"/><stop offset="0.35" stop-color="#ffffff"/><stop offset="0.7" stop-color="#f4f3ee"/><stop offset="1" stop-color="#c9c6ba"/></linearGradient>
      <linearGradient id="frm" x1="0" y1="0" x2="0" y2="1"><stop offset="0" stop-color="#c2673a"/><stop offset="1" stop-color="#a94f22"/></linearGradient>
    </defs>
    <path d="M2.8 2H44L70.2 28.6V91H2.8Z" fill="#000" opacity="0.4" transform="translate(0,1.6)"/>
    <path d="M2.8 2H44L70.2 28.6V91H2.8Z" fill="url(#pg)"/>
    <path d="M44 2Q52 12 50.4 21.6Q60 20 70.2 28.6L71 31Q60 23 48.4 24.4Q49.6 12 44 2Z" fill="#8a8468" opacity="0.35"/>
    <path d="M44 2Q51 11 49.6 20.6Q59 19 70.2 28.6Z" fill="url(#fold)"/>
    <rect x="15.6" y="25.4" width="42" height="42.4" rx="5" fill="url(#frm)"/>
    <rect x="16.4" y="26.2" width="40.4" height="40.8" rx="4.4" fill="none" stroke="#d07a4a" stroke-width="0.8" opacity="0.7"/>
    <rect x="21" y="31" width="32" height="31.4" rx="1.5" fill="#2e3133"/>
    <rect x="23.6" y="33.6" width="10.6" height="6.4" rx="2" fill="none" stroke="#b9bcbd" stroke-width="1"/>
    <rect x="37.2" y="44.8" width="13.4" height="7.2" rx="0.8" fill="none" stroke="#b9bcbd" stroke-width="1"/>
    <rect x="24.6" y="53.6" width="9.4" height="6.4" rx="1.6" fill="none" stroke="#b9bcbd" stroke-width="1"/>
    <path d="M34 40L38 45" stroke="#b9bcbd" stroke-width="1.1"/>
    <text x="36.6" y="86.4" text-anchor="middle" font-family="Liberation Sans,sans-serif" font-weight="bold" font-size="12.6" fill="#7b7b7b" textLength="33.6" lengthAdjust="spacingAndGlyphs">SCAP</text>
  </svg>
  <!-- mouse cursor at 1546,580 -> local 586,580 -->
  <svg style="left:585.5px;top:579px" width="14" height="19" viewBox="0 0 14 19"><path d="M1 0.8V15.6L4.6 12.4L7.2 17.8L9.8 16.6L7.2 11.4H12Z" fill="#f5ee1f" stroke="#000" stroke-width="1.1" stroke-linejoin="round"/></svg>
  <div id="e-status" class="a">
    <div class="a" style="left:71px;top:7px;width:1px;height:10px;background:#fff"></div>
    <svg style="left:915px;top:4px" width="18" height="14" viewBox="0 0 18 14"><rect x="0" y="0" width="5" height="13" fill="#f6f6f6"/><path d="M0 4.4H5M0 8.6H5" stroke="#cfcfcf" stroke-width="0.6"/><rect x="1.7" y="1.7" width="1.6" height="1.6" fill="#55584a"/><rect x="1.7" y="5.7" width="1.6" height="1.6" fill="#3b8ff0"/><rect x="1.7" y="9.7" width="1.6" height="1.6" fill="#c8421c"/><path d="M6.2 2.5H10M12 2.5H16M6.2 6.5H10M12 6.5H16M6.2 10.5H10M12 10.5H16" stroke="#787878" stroke-width="1"/></svg>
    <div class="a" style="left:934px;top:0;width:22px;height:23px;background:#686868;border:1px solid #a2a2a2"></div>
    <svg style="left:939px;top:6px" width="14" height="11" viewBox="0 0 14 11"><rect x="0" y="0.2" width="13.8" height="10.6" fill="#f2f2f2"/><rect x="1.8" y="1.8" width="10.2" height="7.4" fill="#2f8fe0"/><path d="M1.8 9.2V5.4L5 3.8L8 6L10.4 5L12 6.2V9.2Z" fill="#5f9a8a"/><path d="M1.8 9.2V7.6L12 7V9.2Z" fill="#1f6fc0"/><path d="M4 3.4H11V4.6H4Z" fill="#d6ecf7" opacity="0.7"/></svg>
  </div>
  <div id="e-bot" class="a"></div>
</div>
<div id="txt">
<span class="t" id="ttl" style="left:30.50px;top:5.50px;font-size:11.7px;color:#9a9a9a;letter-spacing:0.133px;">test - Scrivener</span>
<span class="t" id="m1" style="left:11.50px;top:33.00px;font-size:12px;color:#ffffff;letter-spacing:-0.666px;"><u>F</u>ile</span>
<span class="t" id="m2" style="left:44.50px;top:33.00px;font-size:12px;color:#ffffff;letter-spacing:-0.666px;"><u>E</u>dit</span>
<span class="t" id="m3" style="left:78.50px;top:33.00px;font-size:12px;color:#ffffff;letter-spacing:-0.200px;"><u>I</u>nsert</span>
<span class="t" id="m4" style="left:122.50px;top:33.00px;font-size:12px;color:#ffffff;letter-spacing:-0.333px;"><u>V</u>iew</span>
<span class="t" id="m5" style="left:162.50px;top:33.00px;font-size:12px;color:#ffffff;letter-spacing:0.000px;"><u>N</u>avigate</span>
<span class="t" id="m6" style="left:224.50px;top:33.00px;font-size:12px;color:#ffffff;letter-spacing:-0.167px;"><u>P</u>roject</span>
<span class="t" id="m7" style="left:275.50px;top:33.00px;font-size:12px;color:#ffffff;letter-spacing:-0.125px;"><u>D</u>ocuments</span>
<span class="t" id="m8" style="left:349.50px;top:33.00px;font-size:12px;color:#ffffff;letter-spacing:0.000px;">F<u>o</u>rmat</span>
<span class="t" id="m9" style="left:402.50px;top:33.00px;font-size:12px;color:#ffffff;letter-spacing:0.000px;"><u>W</u>indow</span>
<span class="t" id="m10" style="left:460.50px;top:33.00px;font-size:12px;color:#ffffff;letter-spacing:0.000px;"><u>H</u>elp</span>
<span class="t" id="tbt" style="left:458.50px;top:63.00px;font-size:12.5px;color:#ffffff;letter-spacing:-0.675px;">Trash</span>
<span class="t" id="b1" style="left:32.50px;top:92.50px;font-size:11.7px;color:#ffffff;letter-spacing:0.250px;">Draft</span>
<span class="t" id="b2" style="left:42.50px;top:115.50px;font-size:11.7px;color:#8a8a8a;letter-spacing:-0.089px;font-style:italic;">How can I change ...</span>
<span class="t" id="b3" style="left:32.50px;top:138.50px;font-size:11.7px;color:#ffffff;letter-spacing:-0.286px;">Research</span>
<span class="t" id="b4" style="left:33.50px;top:161.50px;font-size:11.7px;color:#ffffff;letter-spacing:-0.750px;">Trash</span>
<span class="t" id="c1" style="left:157.30px;top:100.00px;font-size:12.3px;color:#959595;letter-spacing:0.373px;">No Style</span>
<span class="t" id="c2" style="left:316.50px;top:97.50px;font-size:11.7px;color:#8c8c8c;letter-spacing:-0.143px;">Segoe UI</span>
<span class="t" id="c3" style="left:456.00px;top:97.50px;font-size:11.7px;color:#8c8c8c;letter-spacing:-0.166px;">Regular</span>
<span class="t" id="c4" style="left:563.50px;top:97.50px;font-size:11.7px;color:#8c8c8c;letter-spacing:0.000px;">10</span>
<span class="t" id="c5" style="left:615.50px;top:97.50px;font-size:11.7px;color:#8c8c8c;letter-spacing:-0.667px;">1.0x</span>
<span class="t" id="hd" style="left:226.50px;top:125.50px;font-size:12.5px;color:#ffffff;letter-spacing:-0.750px;">Trash</span>
<span class="t" id="ctr" style="left:440.50px;top:572.50px;font-size:14.5px;color:#ffffff;letter-spacing:0.125px;">&quot;Trash&quot; contains no subdocuments.</span>
<span class="t" id="et" style="left:1069.50px;top:-1.50px;font-size:11.6px;color:#9a9a9a;letter-spacing:0.856px;">새 폴더 (3)</span>
<span class="t" id="tab1" style="left:977.50px;top:24.50px;font-size:11.6px;color:#ffffff;letter-spacing:1.000px;">파일</span>
<span class="t" id="tab2" style="left:1030.50px;top:24.50px;font-size:11.6px;color:#ffffff;letter-spacing:-4.000px;">홈</span>
<span class="t" id="tab3" style="left:1071.50px;top:24.50px;font-size:11.6px;color:#ffffff;letter-spacing:1.000px;">공유</span>
<span class="t" id="tab4" style="left:1124.50px;top:24.50px;font-size:11.6px;color:#ffffff;letter-spacing:1.000px;">보기</span>
<span class="t" id="addr" style="left:1106.90px;top:54.50px;font-size:11.6px;color:#ffffff;letter-spacing:0.745px;">새 폴더 (3)</span>
<span class="t" id="srch" style="left:1820.50px;top:54.50px;font-size:11.6px;color:#8a8a8a;letter-spacing:0.623px;">새 폴더 (...</span>
<span class="t" id="file" style="left:1189.50px;top:184.50px;font-size:11.7px;color:#ffffff;letter-spacing:-0.250px;">Test.scap</span>
<span class="t" id="stat" style="left:974.50px;top:1018.00px;font-size:11.6px;color:#ffffff;letter-spacing:1.000px;">1개 항목</span>
<span class="t" id="n0" style="left:1005.30px;top:101.00px;font-size:11.6px;color:#ffffff;letter-spacing:1.462px;">즐겨찾기</span>
<span class="t" id="n1" style="left:1013.00px;top:125.00px;font-size:11.6px;color:#ffffff;letter-spacing:1.750px;">바탕 화면</span>
<span class="t" id="n2" style="left:1013.00px;top:149.00px;font-size:11.6px;color:#ffffff;letter-spacing:1.535px;">다운로드</span>
<span class="t" id="n3" style="left:1014.00px;top:173.00px;font-size:11.6px;color:#ffffff;letter-spacing:1.467px;">즐겨찾기</span>
<span class="t" id="n4" style="left:1014.00px;top:197.00px;font-size:11.6px;color:#ffffff;letter-spacing:0.468px;">2024-03</span>
<span class="t" id="n5" style="left:1005.30px;top:229.00px;font-size:11.6px;color:#ffffff;letter-spacing:0.405px;">Dropbox</span>
<span class="t" id="n6" style="left:1013.00px;top:253.00px;font-size:11.6px;color:#ffffff;letter-spacing:0.195px;">.dropbox.cache</span>
<span class="t" id="n7" style="left:1005.30px;top:285.00px;font-size:11.6px;color:#ffffff;letter-spacing:0.127px;">내 PC</span>
<span class="t" id="n8" style="left:1014.00px;top:309.00px;font-size:11.6px;color:#ffffff;letter-spacing:0.800px;">3D 개체</span>
<span class="t" id="n9" style="left:1014.00px;top:333.00px;font-size:11.6px;color:#ffffff;letter-spacing:0.120px;">Galaxy Tab A7</span>
<span class="t" id="n10" style="left:1013.00px;top:357.00px;font-size:11.6px;color:#ffffff;letter-spacing:1.535px;">다운로드</span>
<span class="t" id="n11" style="left:1014.00px;top:381.00px;font-size:11.6px;color:#ffffff;letter-spacing:1.200px;">동영상</span>
<span class="t" id="n12" style="left:1014.00px;top:405.00px;font-size:11.6px;color:#ffffff;letter-spacing:1.000px;">문서</span>
<span class="t" id="n13" style="left:1013.00px;top:429.00px;font-size:11.6px;color:#ffffff;letter-spacing:1.750px;">바탕 화면</span>
<span class="t" id="n14" style="left:1014.00px;top:453.00px;font-size:11.6px;color:#ffffff;letter-spacing:1.000px;">사진</span>
<span class="t" id="n15" style="left:1014.00px;top:477.00px;font-size:11.6px;color:#ffffff;letter-spacing:0.000px;">음악</span>
<span class="t" id="n16" style="left:1013.00px;top:501.00px;font-size:11.6px;color:#ffffff;letter-spacing:-0.118px;">SKBeetle(X31) (C:)</span>
<span class="t" id="n17" style="left:1013.00px;top:525.00px;font-size:11.6px;color:#ffffff;letter-spacing:0.017px;">USB2(256GB) (D:)</span>
<span class="t" id="n18" style="left:1013.00px;top:549.00px;font-size:11.6px;color:#ffffff;letter-spacing:0.580px;">시스템 예약 (E:)</span>
<span class="t" id="n19" style="left:1014.00px;top:573.00px;font-size:11.6px;color:#ffffff;letter-spacing:0.580px;">로컬 디스크 (F:)</span>
<span class="t" id="n20" style="left:1014.00px;top:597.00px;font-size:11.6px;color:#ffffff;letter-spacing:0.560px;">로컬 디스크 (G:)</span>
<span class="t" id="n21" style="left:1014.00px;top:621.00px;font-size:11.6px;color:#ffffff;letter-spacing:0.650px;">새 볼륨 (H:)</span>
<span class="t" id="n22" style="left:1013.00px;top:645.00px;font-size:11.6px;color:#ffffff;letter-spacing:-0.154px;">USB1(1TB) (I:)</span>
<span class="t" id="n23" style="left:1005.30px;top:677.00px;font-size:11.6px;color:#ffffff;letter-spacing:-0.182px;">USB1(1TB) (I:)</span>
<span class="t" id="n24" style="left:1005.30px;top:709.00px;font-size:11.6px;color:#ffffff;letter-spacing:-0.048px;">USB2(256GB) (D:)</span>
<span class="t" id="n25" style="left:1005.30px;top:741.00px;font-size:11.6px;color:#ffffff;letter-spacing:1.665px;">네트워크</span>
</div>
</body>
</html>
